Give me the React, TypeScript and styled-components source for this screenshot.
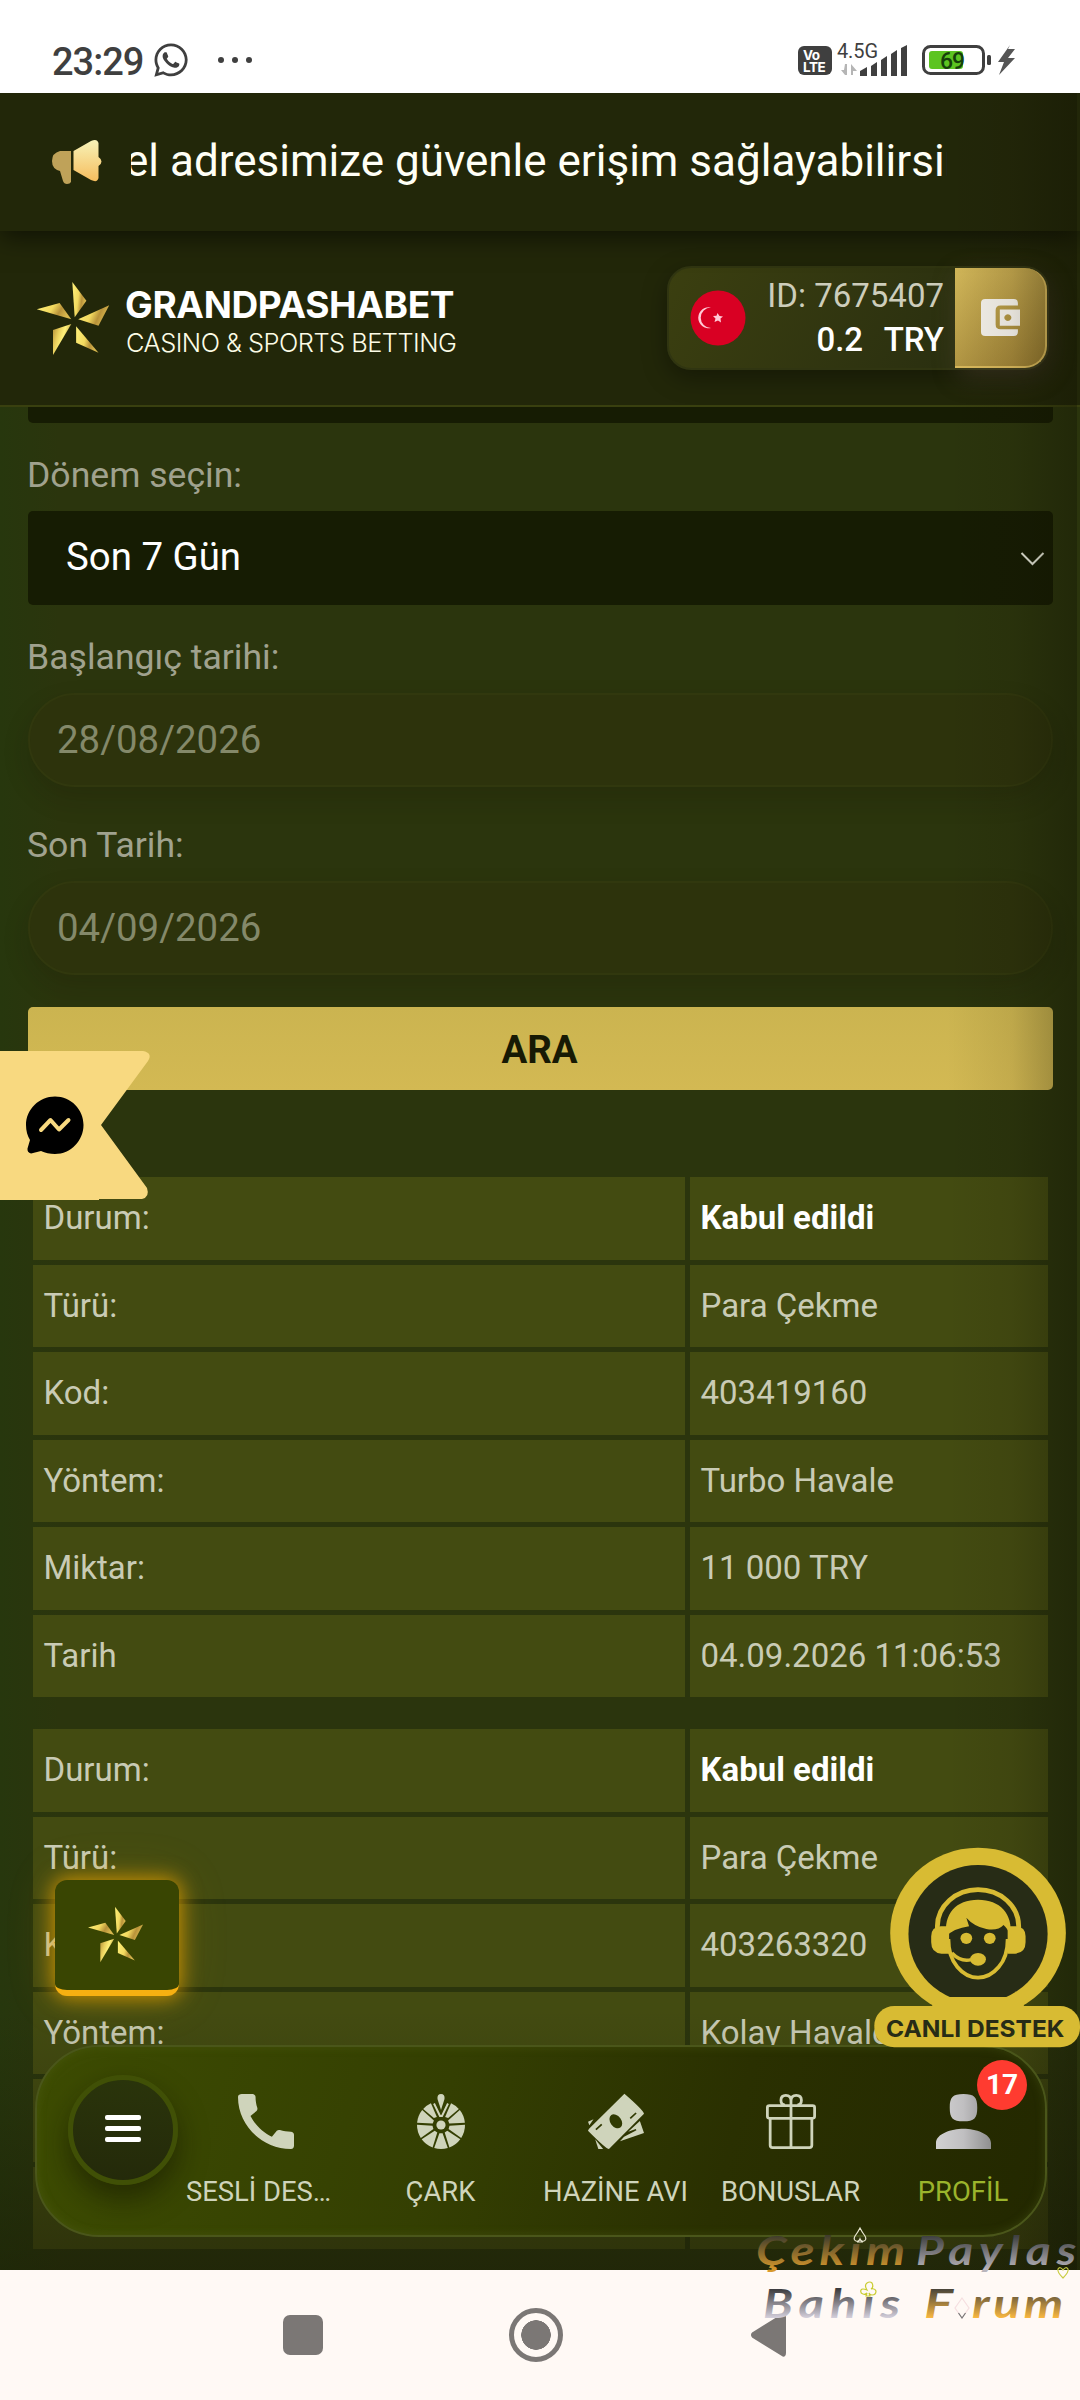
import React from "react";
import styled, { createGlobalStyle } from "styled-components";
import { FaWhatsapp } from "react-icons/fa";

const GlobalStyle = createGlobalStyle`
  * { box-sizing: border-box; }
  body { margin: 0; background: #2a350d; font-family: Roboto, "Noto Sans", sans-serif; }
  svg { display: block; overflow: visible; }
`;

const Screen = styled.div`
  position: relative;
  width: 1080px;
  height: 2400px;
  overflow: hidden;
  display: flex;
  flex-direction: column;
  background: linear-gradient(90deg, #27370d 0, #2b350d 60px, #2b350d 100%);
`;

const StatusBar = styled.div`
  flex: none;
  position: relative;
  z-index: 3;
  height: 93px;
  padding: 45px 64px 0 52px;
  background: #fff;
  display: flex;
  align-items: flex-start;
  color: #3f3f3f;
`;

const Clock = styled.span`
  width: 95px;
  font-size: 38px;
  line-height: 35px;
  font-weight: 500;
  letter-spacing: -1px;
`;

const ChatIcon = styled(FaWhatsapp)`
  width: 38px;
  height: 38px;
  margin: -4px 0 0 5px;
`;

const Dots = styled.div`
  display: flex;
  gap: 8px;
  margin: 12px auto 0 28px;
  i { width: 6px; height: 6px; border-radius: 50%; background: #3f3f3f; }
`;

const Volte = styled.div`
  width: 34px;
  height: 29px;
  margin-top: 1px;
  border-radius: 6px;
  background: #3f3f3f;
  color: #fff;
  font: 700 13.5px/12px Inter, sans-serif;
  padding: 3px 0 0 5px;
  letter-spacing: -0.4px;
`;

const Signal = styled.svg`
  margin-left: 5px;
`;

const Battery = styled.svg`
  margin-left: 13px;
`;

const Ticker = styled.div`
  flex: none;
  position: relative;
  z-index: 2;
  height: 138px;
  background: #222709;
  padding-left: 51px;
  display: flex;
  align-items: center;
  box-shadow: 0 6px 24px rgba(0, 0, 0, 0.55);
`;

const TickerWindow = styled.div`
  width: 816px;
  margin-left: 30px;
  overflow: hidden;
  white-space: nowrap;
  color: #fffff6;
  font-size: 44px;
  line-height: 64px;
  margin-bottom: 2px;
  span { margin-left: -6px; }
`;

const Header = styled.header`
  flex: none;
  position: relative;
  height: 176px;
  padding: 0 31px 0 36px;
  background: #222709;
  border-bottom: 2px solid #39400f;
  display: flex;
  align-items: center;
`;

const Brand = styled.div`
  margin: 9px auto 0 15px;
  color: #fff;
  font-family: Inter, sans-serif;
`;

const BrandName = styled.div`
  font-size: 37px;
  font-weight: 700;
  line-height: 40px;
  letter-spacing: -0.35px;
`;

const BrandTag = styled.div`
  font-size: 25.4px;
  font-weight: 300;
  line-height: 36px;
  color: #fcfce6;
  padding-left: 1px;
  letter-spacing: -0.5px;
`;

const Account = styled.div`
  width: 382px;
  height: 104px;
  border: 2px solid #303511;
  border-radius: 24px;
  background: linear-gradient(120deg, #3b3f10, #2b3010 75%);
  box-shadow: 0 8px 24px rgba(0, 0, 0, 0.35);
  display: flex;
  align-items: center;
  padding-left: 21px;
`;

const AccountText = styled.div`
  margin-left: auto;
  margin-right: 11px;
  text-align: right;
  font-size: 33px;
  line-height: 44px;
  color: #cdcdbb;
  white-space: pre;
  strong { display: block; font-weight: 500; color: #fff; word-spacing: 2.5px; }
`;

const WalletButton = styled.button`
  width: 92px;
  height: 100px;
  padding: 0;
  border: 0 solid #d9b95c;
  border-width: 0 2px 2px 0;
  border-radius: 0 22px 22px 0;
  background: linear-gradient(135deg, #d3b85a, #957930);
  box-shadow: 4px 8px 26px rgba(90, 75, 60, 0.45);
  display: flex;
  align-items: center;
  justify-content: center;
`;

const Content = styled.main`
  flex: 1;
  min-height: 0;
  overflow: hidden;
  padding: 0 27px 0 28px;
`;

const SelectTail = styled.div`
  height: 16px;
  border-radius: 0 0 5px 5px;
  background: #161c03;
`;

const FieldLabel = styled.label<{ $gap: number }>`
  display: block;
  height: 60px;
  margin: ${(p) => p.$gap}px 0 6px;
  line-height: 61px;
  text-indent: -1px;
  font-size: 35.6px;
  color: #a0a28e;
`;

const SelectBox = styled.div`
  height: 94px;
  padding: 0 9px 0 38px;
  border-radius: 5px;
  background: #161c03;
  color: #fff;
  font-size: 38.4px;
  line-height: 92px;
  display: flex;
  align-items: center;
  justify-content: space-between;
  span { height: 94px; }
`;

const DateBox = styled.div`
  height: 94px;
  padding-left: 27px;
  border: 2px solid #31380e;
  border-radius: 47px;
  background: #2d330c;
  box-shadow: 0 12px 26px rgba(20, 15, 0, 0.18);
  color: #84896a;
  font-size: 38.4px;
  line-height: 89px;
`;

const SearchButton = styled.button`
  display: block;
  width: 100%;
  height: 83px;
  margin: 32px 0 87px;
  padding: 0 2px 0 0;
  border: 0;
  border-radius: 5px;
  background: linear-gradient(#cbb450, #d3b953);
  color: #171a04;
  font: 700 38.4px/85px Roboto, sans-serif;
`;

const Record = styled.dl`
  margin: 0 5px 32px;
  display: grid;
  grid-template-columns: 652px 358px;
  grid-auto-rows: 82.5px;
  gap: 5px;
`;

const Cell = styled.div<{ $strong?: boolean }>`
  padding: 0 10.5px;
  background: #434b11;
  color: ${(p) => (p.$strong ? "#fff" : "#c9cbb5")};
  font-weight: ${(p) => (p.$strong ? 700 : 400)};
  font-size: 33px;
  line-height: 81px;
`;

const Vignette = styled.div`
  position: absolute;
  top: 93px;
  right: 3px;
  width: 130px;
  height: 2177px;
  background: linear-gradient(90deg, transparent, rgba(20, 10, 0, 0.08) 50%, rgba(16, 16, 0, 0.34));
  z-index: 3;
`;

const BottomShade = styled.div`
  position: absolute;
  left: 0;
  right: 0;
  top: 2010px;
  height: 260px;
  background: linear-gradient(transparent, rgba(24, 26, 4, 0.5));
`;

const ChatFlag = styled.div`
  position: absolute;
  z-index: 4;
  left: 0;
  top: 1051px;
`;

const StarButton = styled.div`
  position: absolute;
  z-index: 4;
  left: 55px;
  top: 1880px;
  width: 124px;
  height: 116px;
  padding: 0 4px 2px 0;
  border-bottom: 6px solid #f6b011;
  border-radius: 12px;
  background: #394502;
  box-shadow: 0 0 20px 2px rgba(240, 165, 0, 0.75), 0 0 50px rgba(200, 160, 0, 0.2);
  display: flex;
  align-items: center;
  justify-content: center;
`;

const NavBar = styled.nav`
  position: absolute;
  z-index: 4;
  left: 35px;
  top: 2045px;
  width: 1012px;
  height: 192px;
  border: 2px solid #4a561a;
  border-radius: 64px;
  background: linear-gradient(105deg, #3d4c02, #343f02 40%, #2a3001 68%, #232800);
  box-shadow: inset 0 0 10px rgba(90, 105, 30, 0.35);
  display: flex;
  padding-left: 31px;
`;

const MenuButton = styled.div`
  flex: none;
  width: 110px;
  height: 110px;
  margin-top: 28px;
  border: 5px solid #405006;
  border-radius: 50%;
  background: linear-gradient(#2a340b, #242a0a);
  box-shadow: 0 14px 28px rgba(15, 15, 0, 0.5);
  display: flex;
  flex-direction: column;
  gap: 6px;
  align-items: center;
  justify-content: center;
  padding-bottom: 3px;
  i { width: 36px; height: 5px; border-radius: 2px; background: #fff; }
`;

const NavItem = styled.div<{ $active?: boolean; $w?: number; $shift?: number }>`
  flex: none;
  position: relative;
  width: ${(p) => p.$w ?? 175}px;
  padding-top: 47px;
  display: flex;
  flex-direction: column;
  align-items: center;
  gap: 27.5px;
  color: ${(p) => (p.$active ? "#9bb42c" : "#cfd4bb")};
  font-size: 27.4px;
  line-height: 30px;
  white-space: nowrap;
  span { margin-right: ${(p) => p.$shift ?? 0}px; }
`;

const Badge = styled.b`
  position: absolute;
  top: 13px;
  left: 99px;
  width: 50px;
  height: 50px;
  border-radius: 50%;
  background: #ff3b30;
  color: #fff;
  font-size: 28px;
  line-height: 49px;
  text-align: center;
`;

const Support = styled.div`
  position: absolute;
  z-index: 5;
  left: 874px;
  top: 1847px;
`;

const SystemNav = styled.div`
  flex: none;
  height: 130px;
  background: #fff9f5;
  padding: 0 293px 0 283px;
  display: flex;
  align-items: center;
  justify-content: space-between;
`;

const RecentKey = styled.i`
  width: 40px;
  height: 40px;
  border-radius: 7px;
  background: #7b7775;
`;

const HomeKey = styled.i`
  width: 54px;
  height: 54px;
  margin-right: 2px;
  border: 5px solid #7b7775;
  border-radius: 50%;
  background: radial-gradient(circle, #7b7775 14.5px, transparent 15px);
`;

const Watermark = styled.div`
  position: absolute;
  z-index: 6;
  left: 750px;
  top: 2220px;
`;

function Star({ w, h, id }: { w: number; h: number; id: string }) {
  return (
    <svg width={w} height={h} viewBox="0 0 74 75">
      <defs>
        <linearGradient id={id} x1="0" x2="1" y1="0" y2=".5">
          <stop offset="0" stopColor="#b08b35" />
          <stop offset=".35" stopColor="#e9cf5c" />
          <stop offset=".6" stopColor="#fff17a" />
          <stop offset="1" stopColor="#a8842f" />
        </linearGradient>
        <linearGradient id={id + "b"} x1="0" x2="1" y1="0" y2=".3">
          <stop offset="0" stopColor="#fff17a" />
          <stop offset=".5" stopColor="#f2d95f" />
          <stop offset=".75" stopColor="#b8923a" />
          <stop offset="1" stopColor="#d9b84e" />
        </linearGradient>
      </defs>
      <path fill={`url(#${id}b)`} d="M36.3 1 50.4 19.7 38.7 36.3z" />
      <path fill={`url(#${id})`} d="M35.3 43 17 49v25z" />
      <path fill={`url(#${id}b)`} d="M73.2 24.3 62.5 44.7 42.2 38.3z" />
      <path fill={`url(#${id}b)`} d="M40.1 45.3v16.4l22.4 10z" />
      <path fill={`url(#${id}b)`} d="M.8 28.3 23.6 22l11.7 16.3z" />
    </svg>
  );
}

function Megaphone() {
  return (
    <svg width="50" height="46" viewBox="0 0 50 46">
      <defs>
        <linearGradient id="horn" x1="0" x2="0" y1="0" y2="1">
          <stop offset="0" stopColor="#f7f3b8" />
          <stop offset="1" stopColor="#f6bd5e" />
        </linearGradient>
      </defs>
      <path fill="#bfa259" d="M9 12h11v31q-1 2-4 2-3 0-4-3L9 32Q1 30 1 22T9 12z" />
      <path fill="url(#horn)" d="M22.500 12 40 2q6-3 7.500 2v14q3 2 3 4.500t-3 4.500v12q-1 5-7.500 2L22.500 31z" />
    </svg>
  );
}

function Wallet() {
  return (
    <svg width="39" height="37" viewBox="1282 212 112 109" preserveAspectRatio="none" fill="#f4f1ea">
      <path d="M1294 212h82q12 0 12 12v7h-50q-14 0-14 14v42q0 14 14 14h50v8q0 12-12 12h-82q-12 0-12-12v-85q0-12 12-12z" />
      <path fillRule="evenodd" d="M1336 243h58v48h-58zM1359 257a10 10 0 1 0 .1 0z" />
    </svg>
  );
}

function Wheel() {
  const wedges = [68, 106, 143, 180, 217, 254, 292];
  const pt = (r: number, a: number) => {
    const t = (a * Math.PI) / 180;
    return `${(25 + r * Math.sin(t)).toFixed(1)} ${(31 + r * Math.cos(t) * -1).toFixed(1)}`;
  };
  return (
    <svg width="50" height="55" viewBox="0 0 50 55" fill="#cfd4bb">
      {wedges.map((a) => (
        <path key={a} d={`M${pt(8.5, a - 11)}L${pt(24, a - 16.5)}A24 24 0 0 1 ${pt(24, a + 16.5)}L${pt(8.5, a + 11)}z`} />
      ))}
      <path d={`M${pt(9, 27)}L${pt(24, 25)}A24 24 0 0 1 ${pt(24, 48)}L${pt(10, 45)}z`} />
      <path d={`M${pt(9, -27)}L${pt(24, -25)}A24 24 0 0 0 ${pt(24, -48)}L${pt(10, -45)}z`} />
      <path d="M18 9.500 24 22h2L32 9.500" fill="none" stroke="#cfd4bb" strokeWidth="2" />
      <circle cx="25" cy="31" r="4.600" />
      <path d="M25 0q4 0 3.500 5L25 16 21.500 5Q21 0 25 0z" />
    </svg>
  );
}

function Phone() {
  return (
    <svg width="56" height="55" viewBox="3 3 18 18" preserveAspectRatio="none" fill="#cfd4bb">
      <path d="M20.010 15.380c-1.230 0-2.420-.200-3.530-.560-.350-.120-.740-.030-1.010.240l-1.570 1.970c-2.830-1.350-5.480-3.900-6.890-6.830l1.950-1.660c.270-.280.350-.670.240-1.020-.370-1.110-.560-2.300-.560-3.530 0-.540-.450-.990-.990-.990H4.190C3.650 3 3 3.240 3 3.990 3 13.280 10.730 21 20.010 21c.710 0 .990-.630.990-1.180v-3.450c0-.540-.450-.990-.990-.990z" />
    </svg>
  );
}

function Money() {
  return (
    <svg width="56" height="55" viewBox="139 822 163 165" preserveAspectRatio="none">
      <g fill="#cfd4bb">
        <path d="M139 905 155 898 143 916z" />
        <path d="M160 958 183 987h-14z" />
        <path d="M290 903l12 36-70 25 12-14 36-19-2-4-22 8z" />
        <path d="M245 821q56 50 57 60L200 987q-8 0-61-55 2-6 6-9z" />
      </g>
      <ellipse cx="220" cy="904" rx="16" ry="23" transform="rotate(-35 220 904)" fill="#303a02" />
      <path d="M162 929l17-16M262 895l17-16" stroke="#303a02" strokeWidth="5" />
    </svg>
  );
}

function Gift() {
  return (
    <svg width="50" height="55" viewBox="657 822 144 165" preserveAspectRatio="none" fill="none" stroke="#cfd4bb" strokeWidth="8">
      <rect x="661" y="857" width="136" height="38" rx="6" />
      <path d="M669 895v81q0 7 7 7h106q7 0 7-7v-81M729 857v126" />
      <path d="M729 855V842q0-16-15-16-14 0-14 15 0 14 12 14M729 842q0-16 15-16 15 0 15 15 0 14-12 14" />
    </svg>
  );
}

function Profile() {
  return (
    <svg width="55" height="55" viewBox="1150 822 160 165" preserveAspectRatio="none">
      <defs>
        <linearGradient id="user" gradientUnits="userSpaceOnUse" x1="1150" x2="1310" y1="0" y2="0">
          <stop offset="0" stopColor="#d2d2d2" />
          <stop offset=".5" stopColor="#c0bfc1" />
          <stop offset="1" stopColor="#8f8f8f" />
        </linearGradient>
      </defs>
      <path fill="url(#user)" d="M1230 822c32 0 40 10 40 41s-8 41-40 41-40-10-40-41 8-41 40-41zM1150 987v-18c0-28 45-43 80-43s80 15 80 43v18z" />
    </svg>
  );
}

function SupportBadge() {
  const gold = "#d8bb33";
  const dark = "#272c16";
  return (
    <svg width="206" height="201" viewBox="970 80 598 603" preserveAspectRatio="none">
      <circle cx="1272" cy="337" r="255" fill={gold} />
      <ellipse cx="1272" cy="341" rx="202" ry="207" fill={dark} />
      <rect x="971" y="557" width="597" height="124" rx="58" fill={gold} />
      <path d="M1124 530q20 14 14 30h268q-6-16 14-30z" fill={gold} />
      <path d="M1154 330v-12a118 110 0 0 1 236 0v12" fill="none" stroke={gold} strokeWidth="14" />
      <path d="M1180 346C1172 280 1208 238 1272 238s102 42 94 108q-8-22-20-32-16 18-50 12-36-8-58-34l8 26q-44 6-66 30z" fill={gold} />
      <path d="M1172 320q4-66 60-90h80q54 26 60 90" stroke={dark} strokeWidth="6" fill="none" />
      <path d="M1188 322v78h-22q-30-2-30-34v-18q0-28 28-30h16zM1358 322v78h22q30-2 30-34v-18q0-28-28-30h-16z" fill={gold} />
      <path d="M1186 356c0 30 6 60 26 84q26 32 60 32t60-32q26-30 26-84" fill="none" stroke={gold} strokeWidth="11" />
      <circle cx="1238" cy="354" r="17" fill={gold} />
      <circle cx="1306" cy="354" r="17" fill={gold} />
      <path d="M1196 398q26 28 56 20" fill="none" stroke={gold} strokeWidth="10" />
      <ellipse cx="1272" cy="417" rx="23" ry="19" fill={gold} />
      <text x="1005" y="650" textLength="518" lengthAdjust="spacingAndGlyphs" fontFamily="Inter, sans-serif" fontWeight="700" fontSize="70" fill={dark}>
        CANLI DESTEK
      </text>
    </svg>
  );
}

function ForumMark() {
  const font = { fontFamily: "Lato, sans-serif", fontStyle: "italic", fontWeight: 700, fontSize: 41 };
  const grads: [string, number, number, string, string][] = [
    ["g1", 16, 50, "#3f3d2c", "#d8992c"],
    ["s1", 16, 50, "#3f4040", "#b9b5bc"],
    ["g2", 69, 98, "#48443a", "#fbb840"],
    ["s2", 69, 98, "#3b3b3d", "#d5d0dc"],
  ];
  return (
    <svg width="330" height="110" viewBox="0 0 330 110">
      <defs>
        {grads.map(([id, y1, y2, a, b]) => (
          <linearGradient key={id} id={id} gradientUnits="userSpaceOnUse" x1="0" x2="0" y1={y1} y2={y2}>
            <stop offset="0" stopColor={a} />
            <stop offset="1" stopColor={b} />
          </linearGradient>
        ))}
      </defs>
      <g {...font} lengthAdjust="spacingAndGlyphs">
        <text x="6" y="45" letterSpacing="4" textLength="154" lengthAdjust="spacingAndGlyphs" fill="url(#g1)">Çekım</text>
        <text x="166" y="45" letterSpacing="5" textLength="166" lengthAdjust="spacingAndGlyphs" fill="url(#s1)">Paylas</text>
        <text x="13" y="98" letterSpacing="5" textLength="143" lengthAdjust="spacingAndGlyphs" fill="url(#s2)">Bahıs</text>
        <text x="174" y="98" textLength="29" lengthAdjust="spacingAndGlyphs" fill="url(#g2)">F</text>
        <text x="222" y="98" letterSpacing="3" textLength="95" lengthAdjust="spacingAndGlyphs" fill="url(#g2)">rum</text>
      </g>
      <g fill="none" strokeWidth="1.200">
        <path stroke="#e8e6cf" d="M110 8q-2 4-5 8-2 4 1 5 3 1 4-2 1 3 4 2 3-1 1-5-3-4-5-8zM107 22h6" />
        <path stroke="#c8cc42" d="M313 58q-6-6-5-9 2-3 5 1 3-4 5-1 1 3-5 9z" />
        <path stroke="#c9cc2f" d="M117 70q-3-5 0-7 3-2 5 0 2 4-1 6 4-1 5 2 0 4-4 4-2 0-3-2l1 3h-4l1-3q-2 2-4 1-3-1-2-4 1-2 6 0z" />
        <path stroke="#f5dfe0" d="M212 78l7 10-7 10-7-10z" />
        <path stroke="#777" d="M208.500 93 212 98l3.500-5" />
      </g>
    </svg>
  );
}

const records = [
  [["Durum:", "Kabul edildi"], ["Türü:", "Para Çekme"], ["Kod:", "403419160"], ["Yöntem:", "Turbo Havale"], ["Miktar:", "11 000 TRY"], ["Tarih", "04.09.2026 11:06:53"]],
  [["Durum:", "Kabul edildi"], ["Türü:", "Para Çekme"], ["Kod:", "403263320"], ["Yöntem:", "Kolay Havale"], ["", ""], ["", ""]],
];

export default function App() {
  return (
    <Screen>
      <GlobalStyle />
      <StatusBar>
        <Clock>23:29</Clock>
        <ChatIcon />
        <Dots><i /><i /><i /></Dots>
        <Volte>Vo<br />LTE</Volte>
        <Signal width="72" height="33" viewBox="0 0 72 33">
          <text x="0" y="13" fontSize="20" fill="#3f3f3f" textLength="41" fontFamily="Roboto, sans-serif">4.5G</text>
          <path d="M8 19v11L4 25h3zM10 19v11h-2V19zM14 30V19l6 7h-4v4z" fill="#b5b5b5" />
          <path d="M23 26l7-4v9h-7zM34 21l6-4v14h-6zM44 15l6-4v20h-6zM54 9l6-4v26h-6zM64 3l6-3v31h-6z" fill="#3f3f3f" />
        </Signal>
        <Battery width="94" height="31" viewBox="0 0 94 31">
          <rect x="1.500" y="1.500" width="60" height="27" rx="7" fill="none" stroke="#3f3f3f" strokeWidth="3" />
          <rect x="7" y="6" width="34" height="18" rx="3" fill="#5cc421" />
          <rect x="65" y="10" width="4" height="10" rx="1.500" fill="#3f3f3f" />
          <text x="18" y="24" fontSize="23" fontWeight="500" fill="#15400a" textLength="25" fontFamily="Roboto, sans-serif">69</text>
          <path d="M88 0 76 17h6l-5 13 16-17h-7l7-9h-7z" fill="#555" />
        </Battery>
      </StatusBar>
      <Ticker>
        <Megaphone />
        <TickerWindow><span>el adresimize güvenle erişim sağlayabilirsin</span></TickerWindow>
      </Ticker>
      <Header>
        <Star w={74} h={75} id="logo" />
        <Brand>
          <BrandName>GRANDPASHABET</BrandName>
          <BrandTag>CASINO &amp; SPORTS BETTING</BrandTag>
        </Brand>
        <Account>
          <svg width="56" height="56" viewBox="0 0 56 56">
            <circle cx="28" cy="28" r="27.500" fill="#d90023" />
            <path d="M21 17.500a10.500 10.500 0 1 0 0 20.500 9.500 9.500 0 1 1 0-20.500z" fill="#ffc9d6" />
            <path d="M27.500 23l2 3 3.500.500-2.500 2 .500 4-3-2-3.500 1.500 1-3.500-2.500-2.500 3.500-.200z" fill="#ffc9d6" />
          </svg>
          <AccountText>ID: 7675407<strong>0.2  TRY</strong></AccountText>
          <WalletButton><Wallet /></WalletButton>
        </Account>
      </Header>
      <Content>
        <SelectTail />
        <FieldLabel $gap={22}>Dönem seçin:</FieldLabel>
        <SelectBox>
          <span>Son 7 Gün</span>
          <svg width="23" height="13" viewBox="0 0 23 13" fill="none" stroke="#e4e6d8" strokeWidth="2">
            <path d="M.5 1 11.500 12 22.500 1" />
          </svg>
        </SelectBox>
        <FieldLabel $gap={22}>Başlangıç tarihi:</FieldLabel>
        <DateBox>28/08/2026</DateBox>
        <FieldLabel $gap={28}>Son Tarih:</FieldLabel>
        <DateBox>04/09/2026</DateBox>
        <SearchButton>ARA</SearchButton>
        {records.map((rows, r) => (
          <Record key={r}>
            {rows.map(([name, value], i) => (
              <React.Fragment key={i}>
                <Cell>{name}</Cell>
                <Cell $strong={i === 0}>{value}</Cell>
              </React.Fragment>
            ))}
          </Record>
        ))}
      </Content>
      <SystemNav>
        <RecentKey />
        <HomeKey />
        <svg width="37" height="44" viewBox="0 0 37 44">
          <path d="M3 20 32 2q3-2 3 2v36q0 4-3 2L3 24q-2-2 0-4z" fill="#7b7775" stroke="#7b7775" strokeWidth="2" />
        </svg>
      </SystemNav>
      <BottomShade />
      <Vignette />
      <ChatFlag>
        <svg width="150" height="149" viewBox="0 0 150 149">
          <path d="M0 0h143q10 2 5 10L101 74l46 63q3 9-5 11H99v1H0z" fill="#f8d980" />
          <path d="M55 45.500c16 0 28.500 13 28.500 28.500S71 103 55 103c-5 0-10-1-14-3l-10 2.500q-4-1-3.500-5L30 89c-2.500-4-4-9-4-15 0-15.500 13-28.500 29-28.500z" fill="#000" />
          <path d="M41 79l9.500-10 8.500 9.500L68.500 69" fill="none" stroke="#f8d980" strokeWidth="4" strokeLinecap="round" strokeLinejoin="round" />
        </svg>
      </ChatFlag>
      <StarButton><Star w={57} h={57} id="fab" /></StarButton>
      <NavBar>
        <MenuButton><i /><i /><i /></MenuButton>
        <NavItem $shift={14}><Phone /><span>SESLİ DES…</span></NavItem>
        <NavItem><Wheel /><span>ÇARK</span></NavItem>
        <NavItem><Money /><span>HAZİNE AVI</span></NavItem>
        <NavItem><Gift /><span>BONUSLAR</span></NavItem>
        <NavItem $active $w={170}><Profile /><Badge>17</Badge><span>PROFİL</span></NavItem>
      </NavBar>
      <Support><SupportBadge /></Support>
      <Watermark><ForumMark /></Watermark>
    </Screen>
  );
}
